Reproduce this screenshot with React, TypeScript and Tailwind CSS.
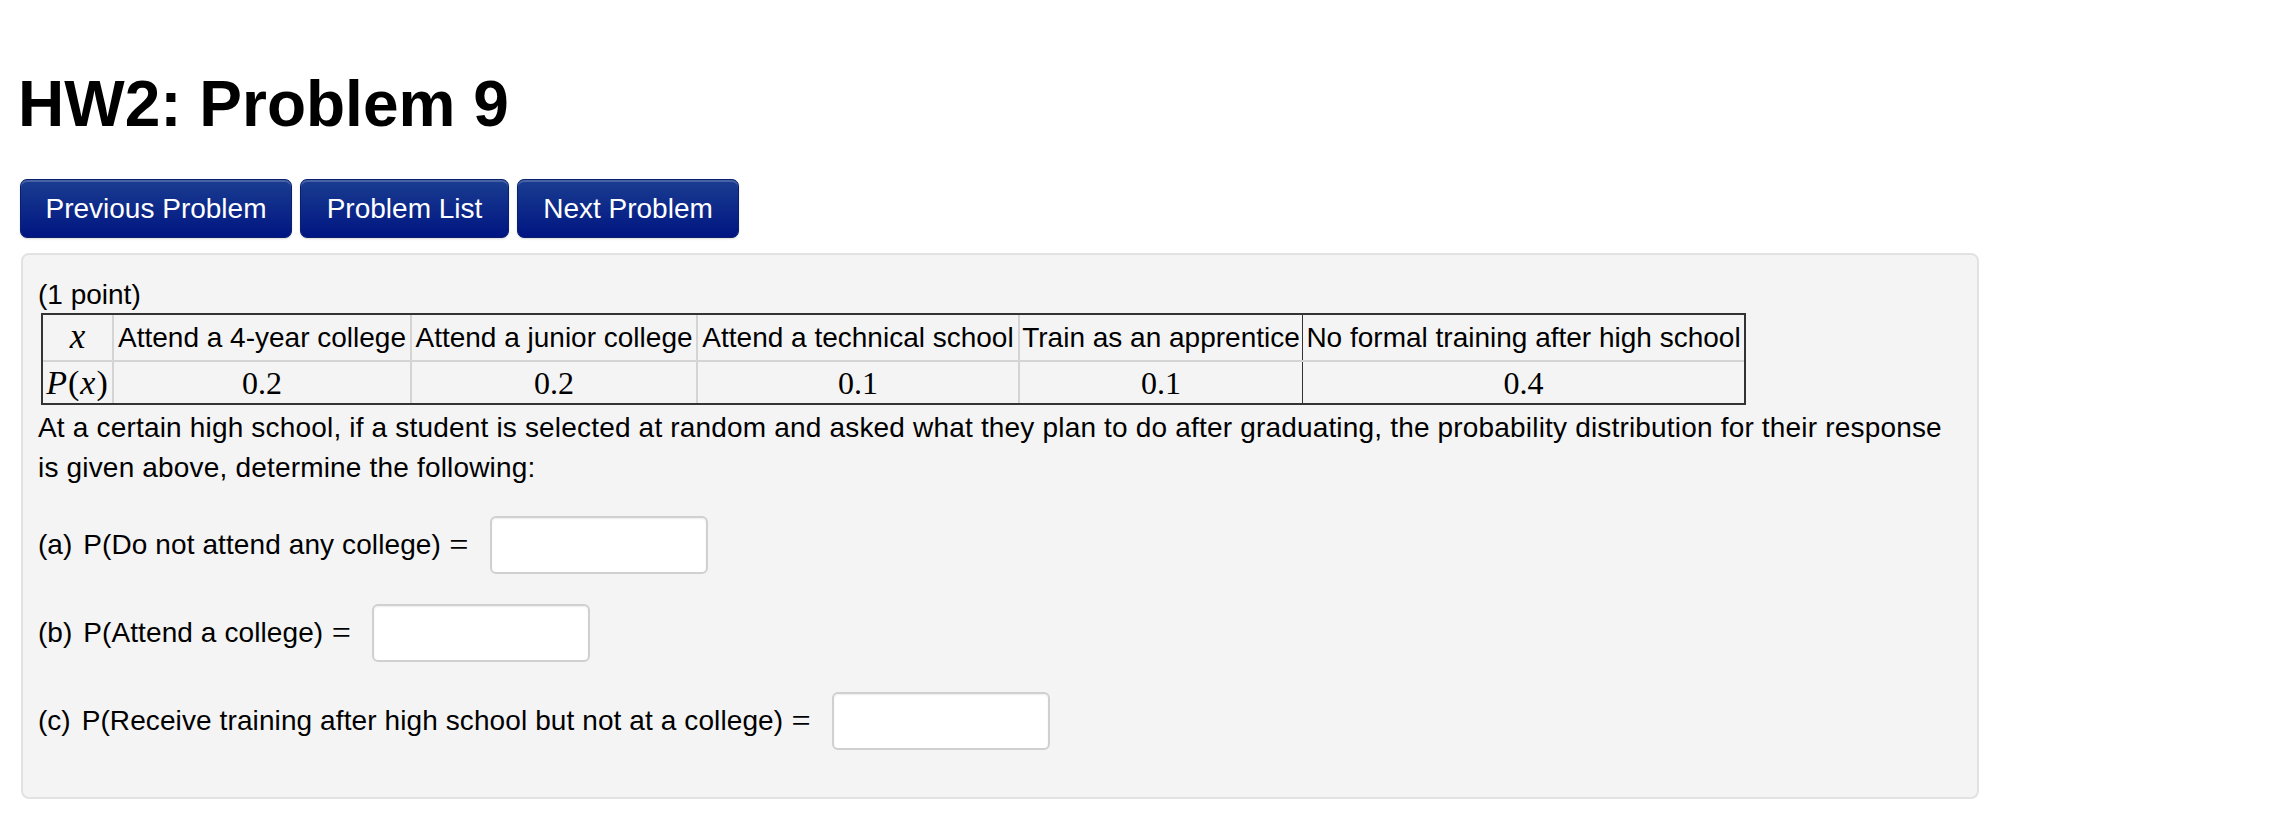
import React from "react";

const serif = "font-['Liberation_Serif','Times_New_Roman',serif]";

function NavButton({ label, w }: { label: string; w: string }) {
  return (
    <button
      className={`${w} h-[59px] rounded-[7px] border border-[#0a1f6e] bg-[linear-gradient(to_bottom,#1a3d90,#001582)] shadow-[inset_0_2px_0_rgba(255,255,255,0.2),0_1px_2px_rgba(0,0,0,0.15)] text-white text-[28px] leading-none flex items-center justify-center`}
    >
      {label}
    </button>
  );
}

function Eq() {
  return (
    <span className={`${serif} inline-block w-[22px] text-center text-[34px] leading-none`}>=</span>
  );
}

function Answer({ tag, text }: { tag: string; text: string }) {
  return (
    <div className="flex items-center h-[58px]">
      <span>{tag}</span>
      <span className="ml-[11px] tracking-[0.1px]">{text}</span>
      <span className="ml-[7px] flex items-center">
        <Eq />
      </span>
      <div className="ml-[20px] w-[218px] h-[58px] rounded-[6px] border-2 border-[#d0d0d0] bg-white shadow-[inset_0_1px_2px_rgba(0,0,0,0.07)]" />
    </div>
  );
}

const headers = [
  "Attend a 4-year college",
  "Attend a junior college",
  "Attend a technical school",
  "Train as an apprentice",
  "No formal training after high school",
];
const probs = ["0.2", "0.2", "0.1", "0.1", "0.4"];
const cellBorders = [
  "border-r-2 border-[#d4d4d4]",
  "border-r-2 border-[#d4d4d4]",
  "border-r-2 border-[#d4d4d4]",
  "border-r-2 border-[#d4d4d4]",
  "border-r border-[#333333]",
  "",
];

export default function App() {
  return (
    <div className="min-h-[826px] w-[2278px] bg-white text-black font-['Liberation_Sans',Arial,Helvetica,sans-serif]">
      <h1 className="ml-[18px] pt-[72px] text-[64px] leading-[64px] font-bold">
        HW2: Problem 9
      </h1>

      <div className="ml-[20px] mt-[43px] flex gap-[8px]">
        <NavButton label="Previous Problem" w="w-[272px]" />
        <NavButton label="Problem List" w="w-[209px]" />
        <NavButton label="Next Problem" w="w-[222px]" />
      </div>

      <div className="ml-[21px] mt-[15px] w-[1958px] h-[546px] rounded-[8px] border-2 border-[#e2e2e2] bg-[#f4f4f4] pl-[15px] pt-[18px] text-[28px] leading-[40px]">
        <div className="h-[40px] pt-[2px] leading-[40px]">(1 point)</div>

        <div className="ml-[3px] w-[1705px] border-2 border-[#333333]">
          <div className="grid grid-cols-[71px_298px_286px_322px_283px_441px] h-[47px] border-b-2 border-[#d4d4d4]">
            <div className={`${cellBorders[0]} flex items-center justify-center pb-[2px]`}>
              <span className={`${serif} italic text-[35px] leading-none`}>x</span>
            </div>
            {headers.map((h, i) => (
              <div
                key={h}
                className={`${cellBorders[i + 1]} flex items-center justify-center whitespace-nowrap pt-[1px] leading-none`}
              >
                {h}
              </div>
            ))}
          </div>
          <div className="grid grid-cols-[71px_298px_286px_322px_283px_441px] h-[41px]">
            <div className={`${cellBorders[0]} flex items-center justify-center`}>
              <span className={`${serif} text-[34px] leading-none tracking-[1px]`}>
                <span className="italic">P</span>(<span className="italic">x</span>)
              </span>
            </div>
            {probs.map((p, i) => (
              <div
                key={i}
                className={`${cellBorders[i + 1]} flex items-center justify-center ${serif} text-[32px] leading-none`}
              >
                {p}
              </div>
            ))}
          </div>
        </div>

        <p className="mt-[3px] leading-[40px] whitespace-nowrap tracking-[0.18px]">
          At a certain high school, if a student is selected at random and asked what they plan to do after graduating, the probability distribution for their response
          <br />
          is given above, determine the following:
        </p>

        <div className="mt-[28px] flex flex-col gap-[30px]">
          <Answer tag="(a)" text="P(Do not attend any college)" />
          <Answer tag="(b)" text="P(Attend a college)" />
          <Answer tag="(c)" text="P(Receive training after high school but not at a college)" />
        </div>
      </div>
    </div>
  );
}
